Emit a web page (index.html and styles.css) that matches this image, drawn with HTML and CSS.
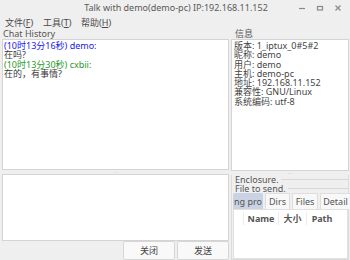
FILE: index.html
```html
<!DOCTYPE html>
<html>
<head>
<meta charset="utf-8">
<link rel="stylesheet" href="styles.css">
</head>
<body>
<div class="window">
  <div class="titlebar">
    <span></span>
    <span class="title">Talk with demo(demo-pc) IP:192.168.11.152</span>
    <span class="controls">
      <svg width="8" height="8" viewBox="0 0 8 8"><path d="M1 4.5h6" stroke="#8a8a8a" stroke-width="1.2"/></svg>
      <svg width="8" height="8" viewBox="0 0 8 8"><rect x="1.5" y="2.5" width="5" height="3.5" fill="none" stroke="#8a8a8a" stroke-width="1.2"/></svg>
      <svg width="8" height="8" viewBox="0 0 8 8"><path d="M1.5 1.5l5 5M6.5 1.5l-5 5" stroke="#8a8a8a" stroke-width="1.2"/></svg>
    </span>
  </div>
  <div class="menubar">
    <span class="menu">文件(<u>F</u>)</span>
    <span class="menu">工具(<u>T</u>)</span>
    <span class="menu">帮助(<u>H</u>)</span>
  </div>
  <div class="main">
    <div class="leftcol">
      <div class="framelabel">Chat History</div>
      <div class="chatbox">
        <div class="blue">(10时13分16秒) demo:</div>
        <div>在吗?</div>
        <div class="green">(10时13分30秒) cxbii:</div>
        <div>在的，有事情?</div>
      </div>
      <div class="splitter"><span class="dots">···</span></div>
      <div class="inputbox"></div>
      <div class="buttons">
        <button class="btn">关闭</button>
        <button class="btn">发送</button>
      </div>
    </div>
    <div class="rightcol">
      <div class="framelabel info-label">信息</div>
      <div class="infobox">
        <div>版本: 1_iptux_0#5#2</div>
        <div>昵称: demo</div>
        <div>用户: demo</div>
        <div>主机: demo-pc</div>
        <div>地址: 192.168.11.152</div>
        <div>兼容性: GNU/Linux</div>
        <div>系统编码: utf-8</div>
      </div>
      <div class="splitter"><span class="dots">···</span></div>
      <div class="enclosure">
        <div class="flabel"><span>Enclosure.</span><span class="fline"></span></div>
        <div class="flabel"><span>File to send.</span><span class="fline"></span></div>
        <div class="tabs">
          <span class="tab active">ng pro</span>
          <span class="tab">Dirs</span>
          <span class="tab t-files">Files</span>
          <span class="tab t-detail">Detail</span>
        </div>
        <div class="table">
          <div class="thead">
            <span class="c0"></span>
            <span class="c1">Name</span>
            <span class="c2">大小</span>
            <span class="c3">Path</span>
          </div>
        </div>
      </div>
    </div>
  </div>
</div>
</body>
</html>
```
FILE: styles.css
```css
html, body {
  margin: 0;
  padding: 0;
}
body {
  width: 350px;
  height: 260px;
  overflow: hidden;
  background: #efefef;
  font-family: "Noto Sans", "Noto Sans CJK SC", sans-serif;
  font-size: 9px;
  color: #3a3a3a;
}
.window {
  display: flex;
  flex-direction: column;
  height: 260px;
}
.titlebar {
  height: 15px;
  display: grid;
  grid-template-columns: 1fr auto 1fr;
  align-items: center;
}
.title {
  font-size: 9px;
  color: #5a5a5a;
  padding-left: 2px;
}
.controls {
  display: flex;
  justify-content: flex-end;
  gap: 10px;
  padding-right: 8px;
}
.menubar {
  height: 14px;
  display: flex;
  align-items: center;
  padding-left: 5px;
  color: #4a4a4a;
}
.menu {
  width: 38px;
}
.menu u {
  text-decoration-thickness: 1px;
}
.main {
  flex: 1;
  display: flex;
  gap: 2px;
  padding: 0 1px 0 2px;
  min-height: 0;
}
.leftcol {
  width: 227px;
  flex-shrink: 0;
  display: flex;
  flex-direction: column;
}
.rightcol {
  flex: 1;
  min-width: 0;
  display: flex;
  flex-direction: column;
}
.framelabel {
  height: 10px;
  line-height: 10px;
  padding-left: 1px;
  color: #555;
}
.info-label {
  padding-left: 4px;
}
.chatbox, .infobox {
  height: 129px;
  background: #fff;
  border: 1px solid #d4d4d4;
  line-height: 9.3px;
  padding-top: 1px;
  box-sizing: content-box;
}
.chatbox {
  padding-left: 1px;
}
.infobox {
  padding-left: 2px;
  color: #444;
}
.blue {
  color: #2020f0;
}
.green {
  color: #2a9a2a;
}
.splitter {
  height: 4px;
  display: flex;
  justify-content: center;
  align-items: center;
}
.dots {
  font-size: 6px;
  line-height: 4px;
  color: #b8b8b8;
}
.inputbox {
  height: 65px;
  background: #fff;
  border: 1px solid #d4d4d4;
}
.buttons {
  flex: 1;
  display: flex;
  justify-content: flex-end;
  gap: 2px;
}
.btn {
  width: 52px;
  height: 19px;
  margin: 0;
  padding: 0;
  border: 1px solid #d6d6d6;
  border-radius: 2px;
  background: #f9f9f9;
  font-family: "Noto Sans", "Noto Sans CJK SC", sans-serif;
  font-size: 9px;
  color: #444;
}
.enclosure {
  flex: 1;
  display: flex;
  flex-direction: column;
  border: 1px solid #dcdcdc;
  border-top: none;
  padding: 0 0 0 1px;
  min-height: 0;
}
.flabel {
  height: 9px;
  line-height: 9px;
  display: flex;
  align-items: center;
  padding-left: 2px;
  color: #555;
}
.fline {
  flex: 1;
  height: 1px;
  background: #d8d8d8;
  margin-left: 2px;
}
.tabs {
  height: 16px;
  display: flex;
  gap: 2px;
}
.tab {
  height: 15px;
  line-height: 15px;
  width: 23px;
  flex-shrink: 0;
  text-align: center;
  background: #f8f8f8;
  border: 1px solid #dedede;
  border-bottom: none;
  color: #555;
  overflow: hidden;
  white-space: nowrap;
}
.tab.active {
  width: 28px;
  border-color: #c9d3e3;
  background: #c9d3e3;
  text-align: left;
  border-radius: 2px 2px 0 0;
}
.tab.t-files {
  width: 24px;
}
.tab.t-detail {
  width: 29px;
}
.table {
  flex: 1;
  background: #fff;
  border: 1px solid #e0e0e0;
}
.thead {
  display: flex;
  height: 13px;
  line-height: 13px;
  font-weight: bold;
  color: #555;
  margin-top: 2px;
}
.thead span {
  border-right: 1px solid #ececec;
}
.c0 { width: 9px; }
.c1 { width: 34px; text-align: center; }
.c2 { width: 27px; text-align: center; }
.c3 { width: 30px; text-align: center; border-right: none !important; }
```
